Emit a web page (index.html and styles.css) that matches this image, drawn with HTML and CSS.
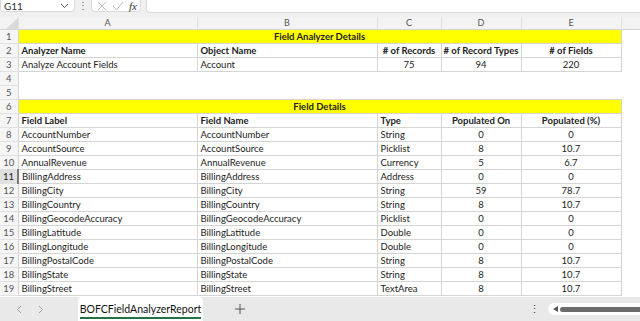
FILE: index.html
```html
<!DOCTYPE html>
<html lang="en">
<head>
    <meta charset="UTF-8">
    <title>BOFCFieldAnalyzerReport</title>
    <link rel="stylesheet" href="styles.css">
</head>
<body>
    <div class="formula-bar">
        <div class="name-box">
            <span>G11</span>
            <svg class="chev" width="9" height="6" viewBox="0 0 9 6"><path d="M1 1l3.5 3.5L8 1" fill="none" stroke="#555" stroke-width="1"/></svg>
        </div>
        <div class="dots">&#8942;</div>
        <div class="fx-box">
            <svg width="10" height="10" viewBox="0 0 10 10"><path d="M1 1l8 8M9 1L1 9" stroke="#b8b8b8" stroke-width="1"/></svg>
            <svg width="12" height="10" viewBox="0 0 12 10"><path d="M1 5l3.5 4L11 1" fill="none" stroke="#b8b8b8" stroke-width="1"/></svg>
            <span class="fx">fx</span>
        </div>
        <div class="formula-input"></div>
    </div>

    <div class="sheet">
        <table class="grid">
            <colgroup>
                <col class="c-rh">
                <col class="c-a">
                <col class="c-b">
                <col class="c-c">
                <col class="c-d">
                <col class="c-e">
                <col>
            </colgroup>
            <thead>
                <tr class="col-heads">
                    <th class="corner"><svg width="12" height="11" viewBox="0 0 12 11"><path d="M12 0V11H0z" fill="#d9d9d9"/></svg></th>
                    <th>A</th><th>B</th><th>C</th><th>D</th><th>E</th><th class="rest"></th>
                </tr>
            </thead>
            <tbody id="rows">
                <tr><td class="rh">1</td><td class="b title" colspan="5">Field Analyzer Details</td><td></td></tr>
                <tr class="bold"><td class="rh">2</td><td class="b">Analyzer Name</td><td class="b">Object Name</td><td class="b ctr"># of Records</td><td class="b ctr"># of Record Types</td><td class="b ctr"># of Fields</td><td></td></tr>
                <tr><td class="rh">3</td><td class="b">Analyze Account Fields</td><td class="b">Account</td><td class="b ctr">75</td><td class="b ctr">94</td><td class="b ctr">220</td><td></td></tr>
                <tr><td class="rh">4</td><td></td><td></td><td></td><td></td><td></td><td></td></tr>
                <tr><td class="rh">5</td><td></td><td></td><td></td><td></td><td></td><td></td></tr>
                <tr><td class="rh">6</td><td class="b title" colspan="5">Field Details</td><td></td></tr>
                <tr class="bold"><td class="rh">7</td><td class="b">Field Label</td><td class="b">Field Name</td><td class="b">Type</td><td class="b ctr">Populated On</td><td class="b ctr">Populated (%)</td><td></td></tr>
            </tbody>
        </table>
    </div>

    <div class="tabbar">
        <svg class="nav" width="6" height="9" viewBox="0 0 6 9"><path d="M5 1L1.5 4.5 5 8" fill="none" stroke="#a0a0a0" stroke-width="1"/></svg>
        <svg class="nav" width="6" height="9" viewBox="0 0 6 9"><path d="M1 1l3.5 3.5L1 8" fill="none" stroke="#a0a0a0" stroke-width="1"/></svg>
        <div class="tab"><span>BOFCFieldAnalyzerReport</span></div>
        <svg class="plus" width="10" height="10" viewBox="0 0 10 10"><path d="M5 0v10M0 5h10" stroke="#555" stroke-width="1"/></svg>
        <span class="spacer"></span>
        <span class="more">&#8942;</span>
        <div class="hscroll">
            <svg width="5" height="6" viewBox="0 0 5 6"><path d="M5 0V6L0 3z" fill="#555"/></svg>
            <div class="thumb"></div>
        </div>
    </div>

    <script>
        const campos = [
            ['AccountNumber', 'String', 0, 0],
            ['AccountSource', 'Picklist', 8, 10.7],
            ['AnnualRevenue', 'Currency', 5, 6.7],
            ['BillingAddress', 'Address', 0, 0],
            ['BillingCity', 'String', 59, 78.7],
            ['BillingCountry', 'String', 8, 10.7],
            ['BillingGeocodeAccuracy', 'Picklist', 0, 0],
            ['BillingLatitude', 'Double', 0, 0],
            ['BillingLongitude', 'Double', 0, 0],
            ['BillingPostalCode', 'String', 8, 10.7],
            ['BillingState', 'String', 8, 10.7],
            ['BillingStreet', 'TextArea', 8, 10.7]
        ];

        const tbody = document.getElementById('rows');
        campos.forEach((c, i) => {
            const n = i + 8;
            const tr = document.createElement('tr');
            tr.innerHTML = `
                <td class="rh${n === 11 ? ' sel' : ''}">${n}</td>
                <td class="b">${c[0]}</td>
                <td class="b">${c[0]}</td>
                <td class="b">${c[1]}</td>
                <td class="b ctr">${c[2]}</td>
                <td class="b ctr">${c[3]}</td>
                <td></td>
            `;
            tbody.appendChild(tr);
        });
    </script>
</body>
</html>
```
FILE: styles.css
```css
body { margin: 0; width: 640px; height: 321px; overflow: hidden; background: #fff; font-family: Lato, "Liberation Sans", sans-serif; color: #222; }

.formula-bar { height: 17px; background: #f0f0f0; display: flex; align-items: flex-start; }
.name-box { width: 75px; height: 12px; box-sizing: border-box; background: #fff; border: 1px solid #dadada; border-top: 0; border-radius: 0 0 4px 4px; display: flex; align-items: center; justify-content: space-between; padding: 0 5px 0 3px; font-size: 10px; color: #333; }
.chev { margin-top: 1px; }
.dots { width: 16px; text-align: center; font-size: 10px; line-height: 11px; color: #666; }
.fx-box { width: 50px; height: 12px; box-sizing: border-box; background: #fff; border: 1px solid #dadada; border-top: 0; border-radius: 0 0 4px 4px; display: flex; align-items: center; gap: 5px; padding-left: 5px; }
.fx { font-family: "Liberation Serif", serif; font-style: italic; font-size: 11px; color: #333; }
.formula-input { flex: 1; margin-left: 5px; height: 12px; background: #fff; border-bottom: 1px solid #dadada; border-left: 1px solid #dadada; border-radius: 0 0 0 4px; }

.sheet { height: 280px; overflow: hidden; }
.grid { border-collapse: collapse; table-layout: fixed; width: 640px; font-size: 9.5px; }
.c-rh { width: 18px; }
.c-a { width: 179px; }
.c-b { width: 180px; }
.c-c { width: 64px; }
.c-d { width: 80px; }
.c-e { width: 100px; }

.col-heads th { height: 12px; padding: 0; background: #f3f3f3; border-bottom: 1px solid #d4d4d4; border-right: 1px solid #e1e1e1; font-weight: normal; font-size: 9px; color: #555; text-align: center; line-height: 12px; }
.col-heads .corner { text-align: right; vertical-align: bottom; }
.col-heads .corner svg { display: block; margin-left: auto; }
.col-heads .rest { border-right: 0; }

td { height: 13px; padding: 0 0 0 3px; line-height: 13px; white-space: nowrap; overflow: hidden; }
td.rh { padding: 0; text-align: center; font-size: 9.5px; color: #555; background: #f5f5f5; border-bottom: 1px solid #e1e1e1; border-right: 1px solid #d4d4d4; }
td.rh.sel { background: #e0e0e0; color: #222; border-right: 2px solid #7a7a7a; }
td.b { border: 1px solid #d4d4d4; }
td.ctr { text-align: center; padding: 0; }
td.title { background: #ffff00; font-weight: bold; text-align: center; padding: 0; }
tr.bold td.b { font-weight: bold; }

.tabbar { height: 24px; background: #e9e9e9; display: flex; align-items: center; font-size: 10.5px; }
.nav { margin-left: 16px; }
.tab { margin-left: 34px; width: 125px; height: 24px; background: #fff; border-radius: 4px 4px 0 0; display: flex; justify-content: center; align-items: center; }
.tab span { color: #111; border-bottom: 2px solid #217346; padding-bottom: 2px; margin-top: 3px; line-height: 12px; }
.plus { margin-left: 32px; }
.spacer { flex: 1; }
.more { font-size: 11px; color: #444; margin-right: 8px; }
.hscroll { width: 92px; height: 12px; margin-right: -5px; background: #fff; border-radius: 6px; display: flex; align-items: center; padding-left: 5px; gap: 2px; }
.thumb { flex: 1; height: 5px; background: #6b6b6b; border-radius: 3px; }
```
